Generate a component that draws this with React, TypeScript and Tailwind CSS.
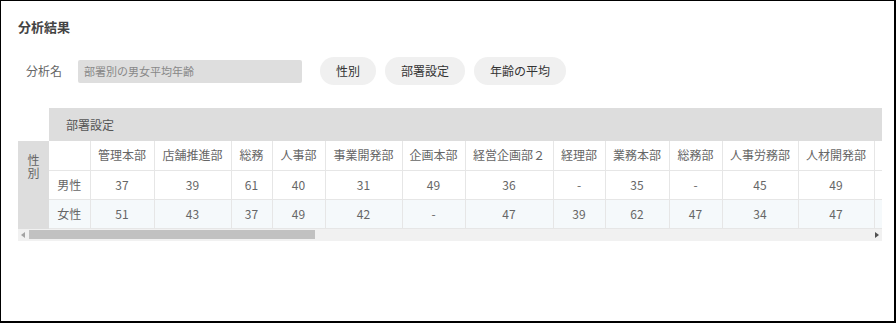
const columns = [
	{ name: '管理本部', w: 64, male: '37', female: '51' },
	{ name: '店舗推進部', w: 77, male: '39', female: '43' },
	{ name: '総務', w: 41, male: '61', female: '37' },
	{ name: '人事部', w: 53, male: '40', female: '49' },
	{ name: '事業開発部', w: 77, male: '31', female: '42' },
	{ name: '企画本部', w: 63, male: '49', female: '-' },
	{ name: '経営企画部２', w: 88, male: '36', female: '47' },
	{ name: '経理部', w: 52, male: '-', female: '39' },
	{ name: '業務本部', w: 64, male: '35', female: '62' },
	{ name: '総務部', w: 53, male: '-', female: '47' },
	{ name: '人事労務部', w: 76, male: '45', female: '34' },
	{ name: '人材開発部', w: 76, male: '49', female: '47' },
	{ name: '', w: 76, male: '', female: '' },
];

export default function App() {
	return (
		<div
			className="h-[323px] w-[896px] overflow-hidden border-t border-r-2 border-b-2 border-l border-black bg-white"
			style={{ fontFamily: '"Noto Sans CJK JP", "Noto Sans", sans-serif' }}
		>
			{/* Title */}
			<h1 className="mt-[17px] ml-[17px] text-[13px] leading-[18px] font-bold text-[#444]">
				分析結果
			</h1>

			{/* Name row */}
			<div className="mt-[21px] flex h-[28px] items-center">
				<span className="ml-[25px] text-[12px] text-[#666]">分析名</span>
				<div className="ml-[16px] flex h-[23px] w-[224px] items-center rounded-[2px] bg-[#dedede] px-[6px] text-[11px] text-[#888]">
					部署別の男女平均年齢
				</div>
				<div className="ml-[18px] flex gap-[9px]">
					<button className="h-[28px] rounded-full bg-[#f0f0f0] px-[16px] text-[12px] text-[#333]">
						性別
					</button>
					<button className="h-[28px] rounded-full bg-[#f0f0f0] px-[16px] text-[12px] text-[#333]">
						部署設定
					</button>
					<button className="h-[28px] rounded-full bg-[#f0f0f0] px-[16px] text-[12px] text-[#333]">
						年齢の平均
					</button>
				</div>
			</div>

			{/* Table */}
			<div className="mt-[23px] ml-[17px] w-[864px]">
				<div className="flex">
					<div className="flex w-[31px] flex-col">
						<div className="h-[33px]" />
						<div className="flex flex-1 justify-center bg-[#dddddd] pt-[12px]">
							<span className="w-[12px] text-[12px] leading-[13px] text-[#666]">
								性別
							</span>
						</div>
					</div>
					<div className="min-w-0 flex-1 overflow-hidden">
						<div className="flex h-[33px] items-center bg-[#dddddd] pl-[17px] text-[12px] text-[#555]">
							部署設定
						</div>
						<table className="border-collapse text-[12px] text-[#666]">
							<tbody>
								<tr className="h-[29px] bg-white">
									<td className="w-[41px] min-w-[41px] border-r border-b border-[#e6e6e6]" />
									{columns.map((c, i) => (
										<td
											key={i}
											style={{ minWidth: c.w, width: c.w }}
											className="border-r border-b border-[#e6e6e6] text-center whitespace-nowrap"
										>
											{c.name}
										</td>
									))}
								</tr>
								<tr className="h-[29px] bg-white">
									<td className="border-r border-b border-[#e6e6e6] text-center">男性</td>
									{columns.map((c, i) => (
										<td
											key={i}
											className="border-r border-b border-[#e6e6e6] text-center"
										>
											{c.male}
										</td>
									))}
								</tr>
								<tr className="h-[29px] bg-[#f5f9fb]">
									<td className="border-r border-b border-[#e6e6e6] text-center">女性</td>
									{columns.map((c, i) => (
										<td
											key={i}
											className="border-r border-b border-[#e6e6e6] text-center"
										>
											{c.female}
										</td>
									))}
								</tr>
							</tbody>
						</table>
					</div>
				</div>

				{/* Scrollbar */}
				<div className="flex h-[12px] items-center bg-[#f1f1f1] px-[3px]">
					<svg width="4" height="6" viewBox="0 0 4 6">
						<path d="M4 0 L0 3 L4 6 Z" fill="#a3a3a3" />
					</svg>
					<div className="ml-[4px] h-[9px] w-[286px] bg-[#c1c1c1]" />
					<div className="flex-1" />
					<svg width="4" height="6" viewBox="0 0 4 6">
						<path d="M0 0 L4 3 L0 6 Z" fill="#505050" />
					</svg>
				</div>
			</div>
		</div>
	);
}
